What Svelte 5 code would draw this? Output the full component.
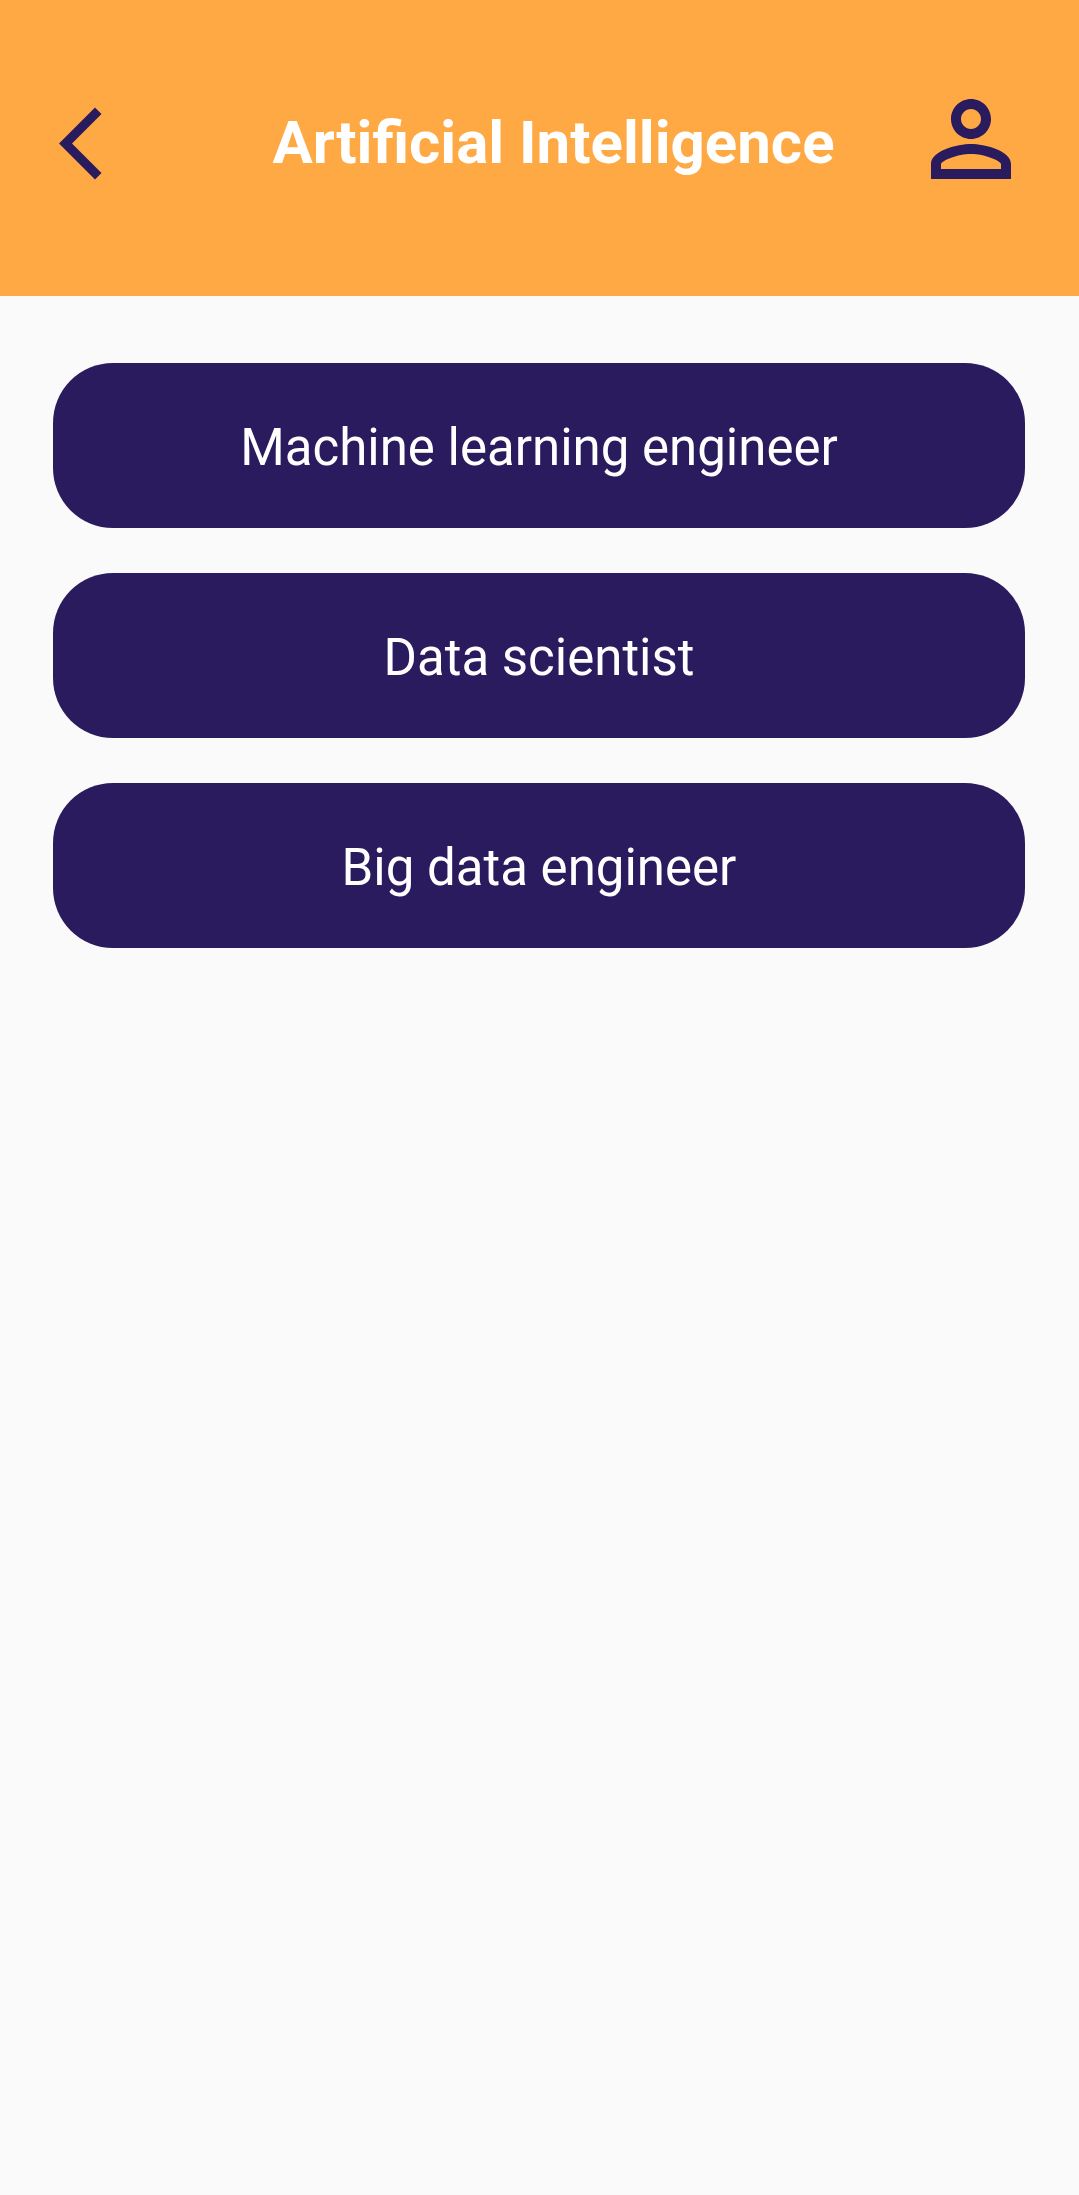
<script>
  const roles = ['Machine learning engineer', 'Data scientist', 'Big data engineer'];
</script>

<header>
  <button class="icon back" aria-label="Back">
    <svg viewBox="0 0 44 74" width="44" height="74"><path d="M1 37.400 37 1.400 43.500 7.900 14 37.400 43.500 66.900 37 73.400z" /></svg>
  </button>
  <h1>Artificial Intelligence</h1>
  <button class="icon profile" aria-label="Profile">
    <svg viewBox="4 4 16 16" width="80" height="80"><path d="M12 6c1.100 0 2 .9 2 2s-.9 2-2 2-2-.9-2-2 .9-2 2-2m0 9c2.700 0 5.800 1.290 6 2v1H6v-.99c.2-.72 3.300-2.010 6-2.010m0-11C9.790 4 8 5.790 8 8s1.790 4 4 4 4-1.790 4-4-1.790-4-4-4m0 9c-2.670 0-8 1.340-8 4v3h16v-3c0-2.660-5.330-4-8-4" /></svg>
  </button>
</header>
<main>
  {#each roles as role}
    <button class="role">{role}</button>
  {/each}
</main>

<style>
  :global(body) {
    margin: 0;
    background: #fafafa;
    font-family: Roboto, sans-serif;
  }
  header {
    display: flex;
    align-items: center;
    justify-content: space-between;
    box-sizing: border-box;
    height: 296px;
    padding: 0 68px 10px 58px;
    background: #ffa945;
  }
  h1 {
    margin: 0;
    color: #fff;
    font-size: 60px;
    line-height: 72px;
    font-weight: 700;
  }
  button {
    border: 0;
    font: inherit;
    cursor: pointer;
  }
  .icon {
    display: flex;
    padding: 0;
    background: none;
    fill: #2a1a5e;
  }
  .back {
    padding-right: 74px;
  }
  .profile {
    padding-bottom: 8px;
  }
  main {
    display: flex;
    flex-direction: column;
    gap: 45px;
    padding: 67px 54px 67px 53px;
  }
  .role {
    padding: 55px 32px 50px;
    border-radius: 60px;
    background: #2a1a5e;
    color: #fff;
    font-size: 51px;
    line-height: 60px;
  }
</style>
